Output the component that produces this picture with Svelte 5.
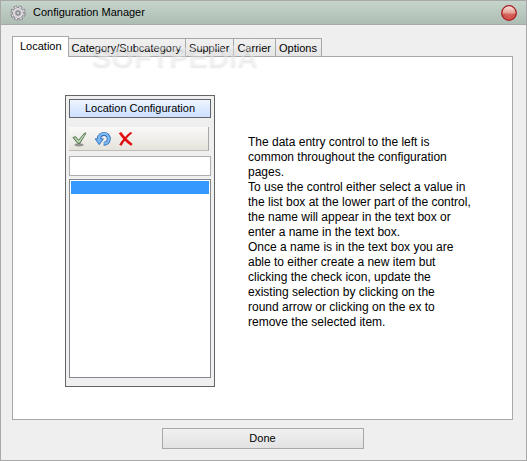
<script>
  const tabs = ['Location', 'Category/Subcategory', 'Supplier', 'Carrier', 'Options'];

  let active = $state('Location');
  let name = $state('');
  let items = $state(['']);
  let selected = $state(0);

  function pick() {
    name = items[selected] ?? '';
  }

  function add() {
    if (name) items.push(name);
  }

  function update() {
    if (name) items[selected] = name;
  }

  function remove() {
    items.splice(selected, 1);
    if (!items.length) items.push('');
    selected = 0;
    name = '';
  }
</script>

<div class="window">
  <header class="titlebar">
    <svg class="gear" viewBox="0 0 16 16" aria-hidden="true">
      <circle cx="8" cy="8" r="6.4" fill="none" stroke="#77747b" stroke-width="2.4" stroke-dasharray="3.3 1.73" />
      <circle cx="8" cy="8" r="5.5" fill="#e2e0e4" stroke="#85818a" stroke-width="0.9" />
      <circle cx="8" cy="8" r="6.1" fill="none" stroke="#e2e0e5" stroke-width="1.5" stroke-dasharray="2 2.79" stroke-dashoffset="-0.6" />
      <circle cx="8" cy="8" r="3.4" fill="#c4c1c7" />
      <circle cx="8" cy="8" r="2.1" fill="#c1cdc6" stroke="#77737c" />
    </svg>
    <h1>Configuration Manager</h1>
    <button class="close" aria-label="Close">
      <svg viewBox="0 0 16 16">
        <defs>
          <linearGradient id="ball" x1="0" y1="0" x2="0" y2="1">
            <stop offset="0" stop-color="#faeae5" />
            <stop offset="0.5" stop-color="#e59c92" />
            <stop offset="0.62" stop-color="#cc5048" />
            <stop offset="1" stop-color="#dc5a54" />
          </linearGradient>
        </defs>
        <circle cx="8" cy="8" r="7.3" fill="url(#ball)" stroke="#a51e20" stroke-width="1.3" />
        <path d="M4 11.5L6 9.5M8 12V9M12 11.5L10 9.5" fill="none" stroke="#e08c84" stroke-width="0.8" />
      </svg>
    </button>
  </header>

  <main>
    <div class="tabs" role="tablist">
      {#each tabs as tab}
        <button role="tab" class="tab" class:active={tab === active} aria-selected={tab === active} onclick={() => (active = tab)}>{tab}</button>
      {/each}
      <span class="watermark" aria-hidden="true">SOFTPEDIA<sup>®</sup></span>
    </div>

    <section class="page" role="tabpanel" aria-label={active}>
      <div class="editor">
        <h2>{active} Configuration</h2>
        <div class="toolbar">
          <button aria-label="Create" onclick={add}>
            <svg viewBox="0 0 16 16">
              <ellipse cx="7" cy="13.8" rx="4.5" ry="1.6" fill="#777" opacity="0.75" />
              <path d="M1 6.5L3.6 5.7L6.5 9.3L13 1.7L13.9 2.3L7.8 12.4H5.8Z" fill="#a2c498" stroke="#4c6c48" stroke-width="0.9" />
              <path d="M3.2 6.9L6.7 11L12.3 3.8" fill="none" stroke="#d2e5cb" stroke-width="0.8" />
            </svg>
          </button>
          <button aria-label="Update" onclick={update}>
            <svg viewBox="0 0 16 16">
              <path d="M4 9V7.2A4.9 4.9 0 1 1 8.7 12.7" fill="none" stroke="#2a69b5" stroke-width="4" />
              <path d="M0.2 7.8H8.4L4.2 13.6Z" fill="#74b5f1" stroke="#2a69b5" stroke-width="0.9" />
              <path d="M4 9.2V7.2A4.9 4.9 0 1 1 9.2 12.6" fill="none" stroke="#7dbaf2" stroke-width="2.5" />
            </svg>
          </button>
          <button aria-label="Remove" onclick={remove}>
            <svg viewBox="0 0 16 16">
              <path d="M0.8 2.2L3.2 1C5.5 4.4 9.8 9.3 14.7 13L13 14.8C8.3 11.7 3.8 7 0.8 2.2Z" fill="#e60f12" />
              <path d="M12.5 1L14.4 2.1C9.9 5.5 6.5 9.5 3.5 14.8L1.2 13.8C4 9 8 4.5 12.5 1Z" fill="#dc0a0d" />
            </svg>
          </button>
        </div>
        <input type="text" aria-label="Name" bind:value={name} />
        <select size="4" aria-label="Items" bind:value={selected} onchange={pick}>
          {#each items as item, i}
            <option value={i}>{item}</option>
          {/each}
        </select>
      </div>

      <div class="help">
        <p>The data entry control to the left is common throughout the configuration pages.</p>
        <p>To use the control either select a value in the list box at the lower part of the control, the name will appear in the text box or enter a name in the text box.</p>
        <p>Once a name is in the text box you are able to either create a new item but clicking the check icon, update the existing selection by clicking on the<br />round arrow or clicking on the ex to<br />remove the selected item.</p>
      </div>
    </section>

    <button class="done">Done</button>
  </main>
</div>

<style>
  :global(body) { margin: 0; }

  .window {
    box-sizing: border-box;
    min-height: 100vh;
    display: flex;
    flex-direction: column;
    border: 1px solid #a8a8a8;
    background: #efefef;
    color: #000;
    font: 11px/15px "Liberation Sans", Arial, sans-serif;
  }

  button, input, select {
    box-sizing: border-box;
    margin: 0;
    padding: 0;
    border: 0;
    border-radius: 0;
    color: inherit;
    font: inherit;
  }
  svg { display: block; width: 16px; height: 16px; }

  .titlebar {
    display: flex;
    align-items: center;
    height: 23px;
    padding: 0 9px;
    border-bottom: 1px solid #a8a8a8;
    background: linear-gradient(#c5d5cb, #aebdb4);
  }
  .titlebar h1 {
    flex: 1;
    margin: 0 0 0 7px;
    font-size: 11px;
    font-weight: normal;
  }
  .close { background: none; }

  main {
    flex: 1;
    display: flex;
    flex-direction: column;
    padding: 11px 13px 11px 11px;
  }

  .tabs {
    position: relative;
    display: flex;
    align-items: flex-end;
  }
  .tab {
    height: 18px;
    padding: 2px 4px 0 3px;
    border: 1px solid #a8a8a8;
    border-width: 1px 1px 0 0;
    background: linear-gradient(#f1f1f1, #e5e5e5);
    white-space: nowrap;
  }
  .tab.active {
    z-index: 1;
    height: 21px;
    margin-bottom: -1px;
    padding: 0 6px 2px 7px;
    border-left-width: 1px;
    background: #fff;
  }
  .watermark {
    position: absolute;
    left: 80px;
    top: 7px;
    color: rgba(255, 255, 255, 0.4);
    font-size: 29px;
    font-weight: bold;
    line-height: 27px;
    text-shadow: 0 2px 2px rgba(0, 0, 0, 0.09);
    pointer-events: none;
  }
  .watermark sup { font-size: 8px; line-height: 8px; vertical-align: top; }

  .page {
    flex: 1;
    display: flex;
    align-items: flex-start;
    padding: 38px 20px 32px 52px;
    border: 1px solid #a8a8a8;
    background: #fff;
  }

  .editor {
    box-sizing: border-box;
    flex: none;
    width: 150px;
    display: flex;
    flex-direction: column;
    padding: 3px 3px 8px;
    border: 1px solid #646464;
    background: #efefef;
  }
  .editor h2 {
    margin: 0 0 9px;
    padding: 1px 0;
    border: 1px solid #646468;
    background: linear-gradient(#eef5ff, #cce0ff);
    font-size: 11px;
    font-weight: normal;
    line-height: 15px;
    text-align: center;
  }
  .toolbar {
    display: flex;
    align-items: center;
    gap: 7px;
    height: 23px;
    margin: 0 2px 5px 0;
    padding-left: 3px;
    border-right: 1px solid #a8a6a0;
    border-bottom: 1px solid #bfbdb5;
    background: linear-gradient(#faf9f8, #e5e3db);
  }
  .toolbar button { background: none; }
  .editor input {
    height: 20px;
    margin-bottom: 3px;
    padding: 0 3px;
    border: 1px solid #abadb3;
    background: #fff;
  }
  .editor select {
    height: 199px;
    padding: 1px;
    border: 1px solid #828790;
    background: #fff;
    outline: none;
    overflow: auto;
  }
  .editor option { min-height: 13px; padding: 0 2px; line-height: 13px; }
  .editor option:checked { background: #3399ff linear-gradient(#3399ff, #3399ff); color: #fff; }

  .help {
    max-width: 226px;
    margin: 40px 0 0 33px;
    font-size: 12px;
  }
  .help p { margin: 0; }

  .done {
    align-self: center;
    width: 202px;
    height: 21px;
    margin-top: 8px;
    border: 1px solid #a8a8a8;
    background: linear-gradient(#f1f1f1, #e2e2e2);
  }
</style>
